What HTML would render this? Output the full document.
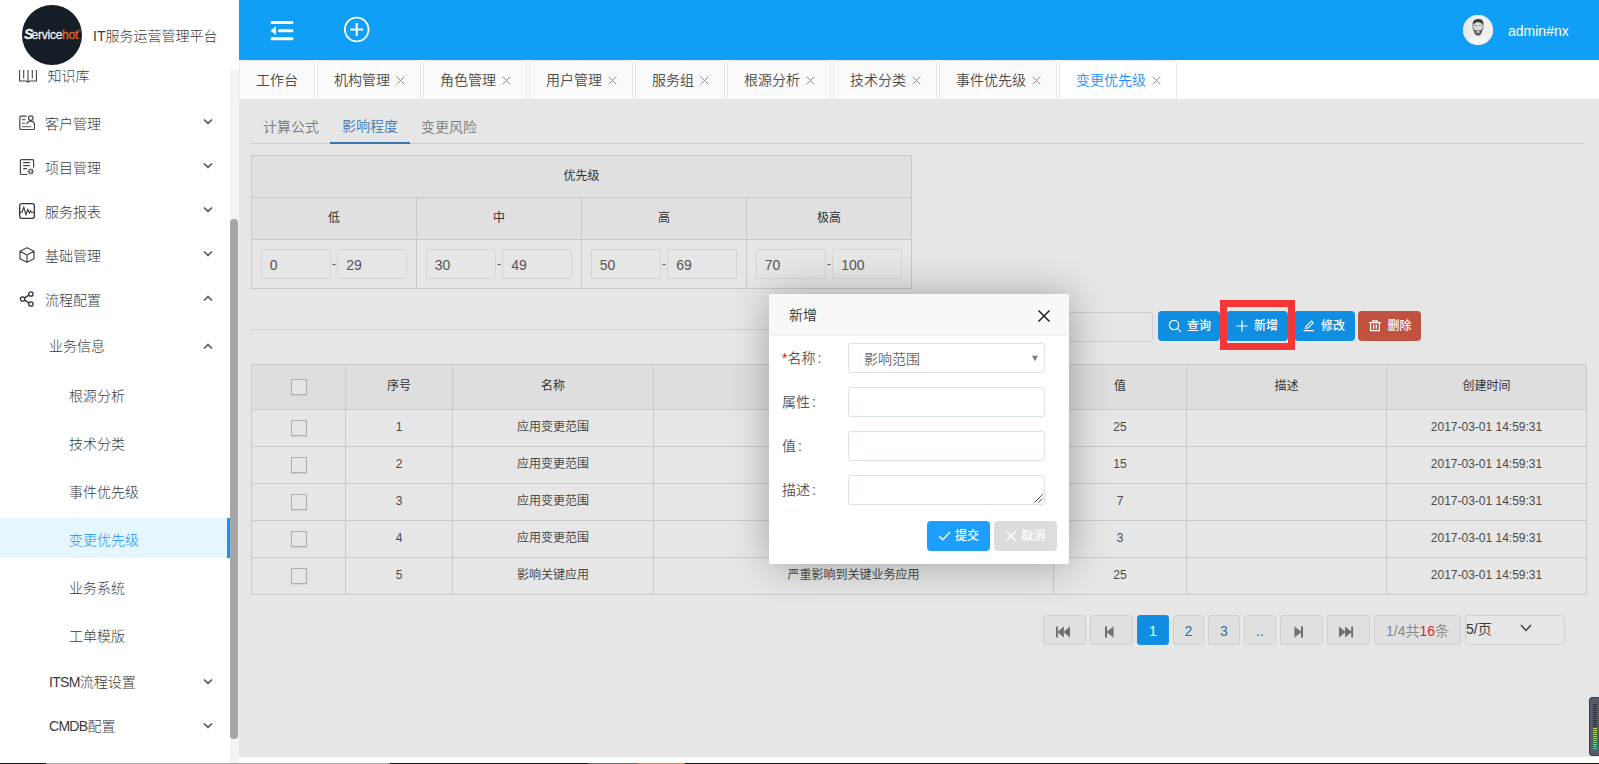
<!DOCTYPE html>
<html lang="zh-CN">
<head>
<meta charset="utf-8">
<title>IT服务运营管理平台</title>
<style>
*{box-sizing:border-box;margin:0;padding:0}
html,body{width:1599px;height:764px;overflow:hidden;background:#fff}
body{font-family:"Liberation Sans","Noto Sans CJK SC",sans-serif;font-size:14px;color:#333;position:relative;font-weight:350}
.abs{position:absolute}
/* sidebar */
#side{position:absolute;left:0;top:0;width:239px;height:764px;background:#fff;overflow:hidden}
#logo{position:absolute;left:22px;top:5px;width:60px;height:60px;border-radius:50%;background:#151d27}
#brand{position:absolute;left:93px;top:26px;font-size:14px;color:#2b2b2b;line-height:20px;white-space:nowrap}
.mi{position:absolute;left:0;width:230px;height:40px;line-height:40px;font-size:14px;color:#444;white-space:nowrap}
.mi .t{position:absolute;left:45px;top:0}
.mi.s .t{left:49px}
.mi.l .t{left:69px}
.mi svg.ic{position:absolute;left:19px;top:11px}
.mi svg.ar{position:absolute;left:203px;top:15px}
.mi.act{background:#e6f6ff;color:#1890ff;border-right:3px solid #1890ff}
#strack{position:absolute;left:230px;top:70px;width:9px;height:693px;background:#f3f3f3}
#sthumb{position:absolute;left:230px;top:219px;width:8px;height:520px;background:#a6a6a6;border-radius:4px}

#sidehead{position:absolute;left:0;top:0;width:239px;height:70px;background:#fff}
#logo .lg{position:absolute;left:2px;top:21px;font-size:12px;color:#f2f2f2;font-weight:normal;letter-spacing:-0.25px;-webkit-text-stroke:0.3px #f2f2f2;line-height:16px;font-style:normal;white-space:nowrap}
#logo .lg b{font-size:14px;font-style:italic;font-weight:bold;margin-right:-1.5px}
#logo .lg i{color:#e4672b;font-style:normal;-webkit-text-stroke:0.3px #e4672b}
#logo .lg sup{-webkit-text-stroke:0;font-size:4px;color:#bbb;position:relative;top:-3px;vertical-align:top;letter-spacing:0}
/* header */
#hdr{position:absolute;left:239px;top:0;width:1360px;height:60px;background:#0f9ff7}
#uname{position:absolute;left:1269px;top:21px;color:#fff;font-size:14px;line-height:20px}
#avatar{position:absolute;left:1224px;top:15px;width:30px;height:30px;border-radius:50%;background:#e9e9e9;overflow:hidden}
/* tabs */
#tabs{position:absolute;left:239px;top:60px;width:1360px;height:39px;background:#fff}
.tab{position:absolute;top:0;height:39px;background:#fafafa;border:1px solid #e8e8e8;border-bottom:none;border-radius:4px 4px 0 0;line-height:38px;font-size:14px;color:#4a4a4a;padding-left:16px;white-space:nowrap}
.tab .x{position:absolute;right:15px;top:15px}
.tab.on{background:#fff;color:#1890ff}
/* content */
#cont{position:absolute;left:239px;top:100px;width:1360px;height:657px;background:#e6e6e6;box-shadow:0 -1px 0 #e6e6e6}

.itab{margin-left:1px;position:absolute;font-size:14px;line-height:20px;color:#7a7a7a;white-space:nowrap}
.itab.on{color:#3b7cb4}
table{border-collapse:collapse;position:absolute;table-layout:fixed}
.pt{width:661px}
.pt th,.pt td{border:1px solid #c9c9c9;text-align:center;font-size:12px;color:#333;font-weight:normal;background:#e0e0e0;padding:0}
.pt th{padding-bottom:4px}
.pt td{background:#e6e6e6;white-space:nowrap;font-size:0}
.pt .in{display:inline-block;width:70px;height:30px;border:1px solid #d2d6d6;border-radius:2px;background:#e6e6e6;text-align:left;padding-left:8px;font-size:14px;line-height:30px;color:#555;vertical-align:middle}
.pt .ds{display:inline-block;width:6.5px;font-size:12px;color:#555;vertical-align:middle;text-align:center}
.sin{border:1px solid #c6d0d6;border-radius:3px;background:#e5e5e5}
.btn{position:absolute;height:30px;border-radius:4px;color:#fff;font-size:12px;line-height:31px;padding-left:1px;text-align:center;white-space:nowrap}
.btn svg{vertical-align:-2.5px;margin-right:5px}
.dt{width:1336px}
.dt th,.dt td{border:1px solid #c9c9c9;text-align:center;font-size:12px;color:#4a4a4a;font-weight:normal;padding:0}
.dt th,.dt td{line-height:16px;padding-bottom:2px}
.dt th{background:#dedede;color:#333;padding-bottom:2px}
.cb{position:relative;top:1px;display:inline-block;width:16px;height:16px;border:1px solid #b0b0b0;background:#e5e5e5;vertical-align:middle;box-shadow:0 1px 1px rgba(0,0,0,.07)}
.pg{position:absolute;height:30px;border:1px solid #ccd2d5;border-radius:3px;background:#e0e0e0;text-align:center;line-height:30px;font-size:14px;color:#888}
.pg svg{vertical-align:-1.5px}
.pg.ic{padding-right:5px}
.pg.cur{background:#108fe2;border-color:#1b8fe4;color:#fff}
.pg.num{color:#2f6fab}
.pg.info em{color:#e0202c;font-style:normal}
.pg.sel{text-align:left;color:#333;background:#e6e6e6}
.pg.sel .pp{position:absolute;left:0;top:-2px}

#modal{position:absolute;left:769px;top:294px;width:300px;height:270px;background:#fff;box-shadow:1px 1px 38px rgba(0,0,0,.3);border-radius:2px}
#modal .mt{position:absolute;left:0;top:0;width:300px;height:42px;background:#f8f8f8;border-bottom:1px solid #eee;border-radius:2px 2px 0 0}
#modal .ttl{position:absolute;left:20px;top:11px;font-size:14px;line-height:20px;color:#333}
#modal .fl i{font-style:normal;margin-left:2px;font-weight:400}
#modal .fl{position:absolute;left:13px;font-size:14px;line-height:20px;color:#555;white-space:nowrap}
#modal .fl em{color:#f00;font-style:normal}
#modal .fi{position:absolute;left:79px;width:197px;height:30px;border:1px solid #d9e3e3;border-radius:3px;background:#fff}
#modal .sv{position:absolute;left:15px;top:5px;font-size:14px;line-height:20px;color:#666}
#modal .car{position:absolute;right:4px;top:8px;font-size:10px;line-height:12px;color:#7a7a7a;transform:scaleY(0.9)}
#modal .mb{position:absolute;top:227px;height:30px;border-radius:4px;font-size:12px;line-height:30px;text-align:center;white-space:nowrap}
#modal .mb svg{vertical-align:-2px;margin-right:4px}
.mi.k .t{left:47.5px}
.mi.k svg.ic{top:9px}
.mi.act .t{top:1.5px}
.mi,#brand{font-weight:300;color:#3a3a3a}
.btn,#modal .mb{font-weight:500}
#modal .fl{top:auto;margin-top:-1px}
.la{letter-spacing:-0.7px}
</style>
</head>
<body>
<div id="cont">
  <div class="itab" style="left:23px;top:17px">计算公式</div>
  <div class="itab on" style="left:102px;top:16px">影响程度</div>
  <div class="itab" style="left:181px;top:17px">变更风险</div>
  <div class="abs" style="left:12px;top:43px;width:1333px;height:1px;background:#cfcfcf"></div>
  <div class="abs" style="left:91px;top:42px;width:80px;height:2px;background:#3678ad"></div>
  <table class="pt" style="left:12px;top:55px"><tr style="height:42px"><th colspan="4">优先级</th></tr><tr style="height:42px"><th>低</th><th>中</th><th>高</th><th>极高</th></tr><tr style="height:49px"><td><span class="in">0</span><span class="ds">-</span><span class="in">29</span></td><td><span class="in">30</span><span class="ds">-</span><span class="in">49</span></td><td><span class="in">50</span><span class="ds">-</span><span class="in">69</span></td><td><span class="in">70</span><span class="ds">-</span><span class="in">100</span></td></tr></table>
  <div class="abs" style="left:12px;top:229px;width:740px;height:1px;background:#cfcfcf"></div>
  <div class="abs sin" style="left:761px;top:212px;width:153px;height:30px"></div>
  <div class="btn" style="left:919px;top:211px;width:62px;background:#108fe2"><svg width="14" height="14" viewBox="0 0 14 14"><circle cx="6" cy="6" r="4.6" fill="none" stroke="#fff" stroke-width="1.2"/><path d="M9.4 9.4 L12.8 12.8" stroke="#fff" stroke-width="1.2"/></svg>查询</div>
  <div class="btn" style="left:987px;top:211px;width:62px;padding-left:0;padding-right:1px;background:#108fe2"><svg width="14" height="14" viewBox="0 0 14 14"><path d="M1.5 7 H12.5 M7 1.5 V12.5" stroke="#fff" stroke-width="1.2"/></svg>新增</div>
  <div class="btn" style="left:1055px;top:211px;width:61px;padding-left:0;padding-right:2px;background:#108fe2"><svg width="14" height="14" viewBox="0 0 14 14"><path d="M3.4 9.4 L4.2 7.2 L9.4 2 L11.2 3.8 L6 9 Z M1.5 11.6 H12" fill="none" stroke="#fff" stroke-width="1.1"/></svg>修改</div>
  <div class="btn" style="left:1119px;top:211px;width:63px;background:#c0523f"><svg width="14" height="14" viewBox="0 0 14 14"><path d="M1 3.6 H13 M4.8 3.4 V1.8 H9.2 V3.4 M2.6 3.8 V11.6 H11.4 V3.8 M5.7 5.6 V9.8 M8.3 5.6 V9.8" fill="none" stroke="#fff" stroke-width="1.2"/></svg>删除</div>
  <div class="abs" style="left:981px;top:200px;width:75px;height:50px;border:7px solid #f63536"></div>
  <table class="dt" style="left:12px;top:264px"><colgroup><col style="width:94px"><col style="width:107px"><col style="width:201px"><col style="width:400px"><col style="width:133px"><col style="width:200px"><col style="width:200px"></colgroup><tr style="height:45px"><th><span class="cb"></span></th><th>序号</th><th>名称</th><th>属性</th><th>值</th><th>描述</th><th>创建时间</th></tr><tr style="height:37px"><td><span class="cb"></span></td><td>1</td><td>应用变更范围</td><td>影响多个业务系统</td><td>25</td><td></td><td>2017-03-01 14:59:31</td></tr><tr style="height:37px"><td><span class="cb"></span></td><td>2</td><td>应用变更范围</td><td>影响单个业务系统</td><td>15</td><td></td><td>2017-03-01 14:59:31</td></tr><tr style="height:37px"><td><span class="cb"></span></td><td>3</td><td>应用变更范围</td><td>影响部分功能模块</td><td>7</td><td></td><td>2017-03-01 14:59:31</td></tr><tr style="height:37px"><td><span class="cb"></span></td><td>4</td><td>应用变更范围</td><td>基本无影响</td><td>3</td><td></td><td>2017-03-01 14:59:31</td></tr><tr style="height:37px"><td><span class="cb"></span></td><td>5</td><td>影响关键应用</td><td>严重影响到关键业务应用</td><td>25</td><td></td><td>2017-03-01 14:59:31</td></tr></table>
  <div class="pg ic" style="left:804px;top:515px;width:43px"><svg width="15" height="12" viewBox="0 0 16 12" preserveAspectRatio="none"><path d="M1 0.5 H3 V11.5 H1 Z M9.5 0.5 V11.5 L2.5 6 Z M16 0.5 V11.5 L9 6 Z" fill="#6e6e6e"/></svg></div>
  <div class="pg ic" style="left:851px;top:515px;width:43px"><svg width="10" height="12" viewBox="0 0 10 12"><path d="M1 0.5 H3 V11.5 H1 Z M9.5 0.5 V11.5 L2.5 6 Z" fill="#6e6e6e"/></svg></div>
  <div class="pg cur" style="left:898px;top:515px;width:32px">1</div>
  <div class="pg num" style="left:934px;top:515px;width:31px">2</div>
  <div class="pg num" style="left:969px;top:515px;width:32px">3</div>
  <div class="pg num" style="left:1005px;top:515px;width:32px">..</div>
  <div class="pg ic" style="left:1041px;top:515px;width:43px"><svg width="10" height="12" viewBox="0 0 10 12"><path d="M9 0.5 H7 V11.5 H9 Z M0.5 0.5 V11.5 L7.5 6 Z" fill="#6e6e6e"/></svg></div>
  <div class="pg ic" style="left:1088px;top:515px;width:43px"><svg width="15" height="12" viewBox="0 0 16 12" preserveAspectRatio="none"><path d="M15 0.5 H13 V11.5 H15 Z M6.5 0.5 V11.5 L13.5 6 Z M0 0.5 V11.5 L7 6 Z" fill="#6e6e6e"/></svg></div>
  <div class="pg info" style="left:1135px;top:515px;width:87px">1/4共<em>16</em>条</div>
  <div class="pg sel" style="left:1226px;top:515px;width:100px"><span class="pp">5/页</span><svg class="abs" style="left:54px;top:8px" width="12" height="8" viewBox="0 0 12 8"><path d="M1 1 L6 6.5 L11 1" fill="none" stroke="#333" stroke-width="1.2"/></svg></div>
</div>
<div id="modal">
  <div class="mt"><span class="ttl">新增</span><svg class="abs" style="left:268px;top:15px" width="14" height="14" viewBox="0 0 14 14"><path d="M1.5 1.5 L12.5 12.5 M12.5 1.5 L1.5 12.5" stroke="#222" stroke-width="1.5"/></svg></div>
  <div class="fl" style="top:55px"><em>*</em>名称<i>:</i></div>
  <div class="fi" style="top:49px"><span class="sv">影响范围</span><span class="car">▼</span></div>
  <div class="fl" style="top:99px">属性<i>:</i></div>
  <div class="fi" style="top:93px"></div>
  <div class="fl" style="top:143px">值<i>:</i></div>
  <div class="fi" style="top:137px"></div>
  <div class="fl" style="top:187px">描述<i>:</i></div>
  <div class="fi" style="top:181px"><svg class="abs" style="right:1px;bottom:1px" width="10" height="10" viewBox="0 0 10 10"><path d="M9.5 1.5 L1.5 9.5 M9.5 5.5 L5.5 9.5" stroke="#555" stroke-width="1"/></svg></div>
  <div class="mb" style="left:158px;width:63px;background:#1e9fff;color:#fff"><svg width="13" height="12" viewBox="0 0 13 12"><path d="M1.2 6.2 L4.8 9.8 L11.8 2.2" fill="none" stroke="#fff" stroke-width="1.4"/></svg>提交</div>
  <div class="mb" style="left:225px;width:63px;background:#dcdcdc;color:#fff"><svg width="12" height="12" viewBox="0 0 12 12"><path d="M1.5 1.5 L10.5 10.5 M10.5 1.5 L1.5 10.5" stroke="#fff" stroke-width="1.2"/></svg>取消</div>
</div>
<div id="side">
  <div id="menu">
  <div class="mi k" style="top:56px"><svg class="ic" width="18" height="18" viewBox="0 0 18 18"><path d="M0.6 0 V16 H7.4 L9 17.3 L10.6 16 H17.4 V0 M4.7 0 V13.6 M9 0 V16 M13.3 0 V13.6" fill="none" stroke="#444" stroke-width="1.1"/></svg><span class="t">知识库</span></div>
  <div class="mi " style="top:104px"><svg class="ic" width="16" height="16" viewBox="0 0 16 16"><path d="M7.8 1.2 H2 Q0.8 1.2 0.8 2.4 V13.3 Q0.8 14.5 2 14.5 H14.3 Q15.5 14.5 15.5 13.3 V9.8 Q15.3 6.1 11.8 6.1 Q8.6 6.1 7.7 9.3" fill="none" stroke="#444" stroke-width="1.2"/><circle cx="11.8" cy="3.1" r="2.3" fill="none" stroke="#444" stroke-width="1.2"/><path d="M2.9 4.5 H6.6 M2.9 8.1 H6.2 M2.9 11.7 H12.4" fill="none" stroke="#777" stroke-width="1.3"/></svg><span class="t">客户管理</span><svg class="ar" style="top:13px" width="10" height="10" viewBox="0 0 10 10"><path d="M1 2.5 L5 6.3 L9 2.5" fill="none" stroke="#555" stroke-width="1.6"/></svg></div>
  <div class="mi " style="top:148px"><svg class="ic" width="16" height="16" viewBox="0 0 16 16"><path d="M14.6 8.6 V1.8 Q14.6 0.6 13.4 0.6 H2.6 Q1.4 0.6 1.4 1.8 V14.3 Q1.4 15.5 2.6 15.5 H8.2 M4.2 3.7 H11 M4.2 6.7 H10.6 M4.2 9.6 H8" fill="none" stroke="#444" stroke-width="1.2"/><circle cx="11.7" cy="12.5" r="1.7" fill="none" stroke="#444" stroke-width="1.1"/><path d="M11.7 9.4 V10.3 M11.7 14.7 V15.6 M8.6 12.5 H9.5 M13.9 12.5 H14.8 M9.5 10.3 L10.2 11 M13.2 14 L13.9 14.7 M13.9 10.3 L13.2 11 M10.2 14 L9.5 14.7" stroke="#444" stroke-width="1.1"/></svg><span class="t">项目管理</span><svg class="ar" style="top:13px" width="10" height="10" viewBox="0 0 10 10"><path d="M1 2.5 L5 6.3 L9 2.5" fill="none" stroke="#555" stroke-width="1.6"/></svg></div>
  <div class="mi " style="top:192px"><svg class="ic" width="16" height="16" viewBox="0 0 16 16"><rect x="0.7" y="0.7" width="14.6" height="14.6" rx="2" fill="none" stroke="#333" stroke-width="1.3"/><path d="M1 9.2 H3 L4.8 4.2 L7 11.6 L8.8 6.4 L10.4 10 L11.6 7.8 L12.6 9.2 H15" fill="none" stroke="#333" stroke-width="1.1"/></svg><span class="t">服务报表</span><svg class="ar" style="top:13px" width="10" height="10" viewBox="0 0 10 10"><path d="M1 2.5 L5 6.3 L9 2.5" fill="none" stroke="#555" stroke-width="1.6"/></svg></div>
  <div class="mi " style="top:236px"><svg class="ic" width="16" height="16" viewBox="0 0 16 16"><path d="M8 0.7 L15 4.3 V11.7 L8 15.3 L1 11.7 V4.3 Z M1 4.3 L8 8 L15 4.3 M8 8 V15.3" fill="none" stroke="#444" stroke-width="1.2" stroke-linejoin="round"/></svg><span class="t">基础管理</span><svg class="ar" style="top:13px" width="10" height="10" viewBox="0 0 10 10"><path d="M1 2.5 L5 6.3 L9 2.5" fill="none" stroke="#555" stroke-width="1.6"/></svg></div>
  <div class="mi " style="top:280px"><svg class="ic" width="16" height="16" viewBox="0 0 16 16"><circle cx="3.6" cy="8" r="2.2" fill="none" stroke="#333" stroke-width="1.3"/><circle cx="11.9" cy="3" r="2.2" fill="none" stroke="#333" stroke-width="1.3"/><circle cx="11.9" cy="13" r="2.2" fill="none" stroke="#333" stroke-width="1.3"/><path d="M5.5 6.9 L10 4.1 M5.5 9.1 L10 11.9" stroke="#333" stroke-width="1.3"/></svg><span class="t">流程配置</span><svg class="ar" style="top:14px" width="10" height="10" viewBox="0 0 10 10"><path d="M1 6.5 L5 2.7 L9 6.5" fill="none" stroke="#555" stroke-width="1.6"/></svg></div>
  <div class="mi s" style="top:326px"><span class="t">业务信息</span><svg class="ar" style="top:16px" width="10" height="10" viewBox="0 0 10 10"><path d="M1 6.5 L5 2.7 L9 6.5" fill="none" stroke="#555" stroke-width="1.6"/></svg></div>
  <div class="mi l" style="top:376px"><span class="t">根源分析</span></div>
  <div class="mi l" style="top:424px"><span class="t">技术分类</span></div>
  <div class="mi l" style="top:472px"><span class="t">事件优先级</span></div>
  <div class="mi l act" style="top:518px"><span class="t">变更优先级</span></div>
  <div class="mi l" style="top:568px"><span class="t">业务系统</span></div>
  <div class="mi l" style="top:616px"><span class="t">工单模版</span></div>
  <div class="mi s" style="top:662px"><span class="t"><span class="la">ITSM</span>流程设置</span><svg class="ar" style="top:15px" width="10" height="10" viewBox="0 0 10 10"><path d="M1 2.5 L5 6.3 L9 2.5" fill="none" stroke="#555" stroke-width="1.6"/></svg></div>
  <div class="mi s" style="top:706px"><span class="t"><span class="la">CMDB</span>配置</span><svg class="ar" style="top:15px" width="10" height="10" viewBox="0 0 10 10"><path d="M1 2.5 L5 6.3 L9 2.5" fill="none" stroke="#555" stroke-width="1.6"/></svg></div>
  </div>
  <div id="strack"></div><div id="sthumb"></div>
  <div id="sidehead"></div>
  <div id="logo"><span class="lg"><b>S</b>ervice<i>hot</i><sup>®</sup></span></div>
  <div id="brand">IT服务运营管理平台</div>
</div>
<div id="hdr">
  <svg class="abs" style="left:30px;top:19px" width="26" height="24" viewBox="0 0 26 24"><path d="M3 3.5 H23 M10.5 11.7 H23 M3 19.7 H23" stroke="#fff" stroke-width="3" stroke-linecap="round" fill="none"/><path d="M1.5 11.7 L7 7.3 V16.1 Z" fill="#fff"/></svg>
  <svg class="abs" style="left:104px;top:16px" width="28" height="28" viewBox="0 0 28 28"><circle cx="13.7" cy="13.5" r="11.8" fill="none" stroke="#fff" stroke-width="1.8"/><path d="M7.2 13.5 H20.2 M13.7 7 V20" stroke="#fff" stroke-width="2"/></svg>
  <div id="avatar"><svg width="30" height="30" viewBox="0 0 30 30"><defs><filter id="bl" x="-20%" y="-20%" width="140%" height="140%"><feGaussianBlur stdDeviation="0.55"/></filter><linearGradient id="ag" x1="0" x2="1"><stop offset="0" stop-color="#e6e6e6"/><stop offset="0.5" stop-color="#f1f1f1"/><stop offset="1" stop-color="#efefef"/></linearGradient></defs><rect width="30" height="30" fill="url(#ag)"/><g filter="url(#bl)"><path d="M9.6 13.5 Q9 7 11.6 5 Q15 3.2 18.6 4.8 Q21.2 7 20.4 13.5 L19.6 15.5 H10.4 Z" fill="#8a8a8a"/><path d="M9.7 9.5 Q9.3 6.3 11.6 5 Q15 3.2 18.6 4.8 Q20.9 6.3 20.3 9.5 Q19 7.4 15 7.6 Q11 7.4 9.7 9.5Z" fill="#3c3c3c"/><ellipse cx="15" cy="11.8" rx="4.5" ry="4.6" fill="#dedede"/><path d="M10.6 14.2 Q11 20.2 15 20.7 Q19 20.2 19.4 14.2 Q17.5 15.4 15 15.4 Q12.5 15.4 10.6 14.2Z" fill="#5a5a5a"/><ellipse cx="15" cy="17" rx="2.1" ry="1" fill="#c4c4c4"/><path d="M12 10.6 H14 M16 10.6 H18" stroke="#777" stroke-width="0.9"/><path d="M14.6 11 V14" stroke="#bbb" stroke-width="0.8"/><path d="M4 30 Q6 22.5 12 21.6 Q15 23.2 18 21.6 Q24 22.5 26 30Z" fill="#f6f6f6"/></g></svg></div>
  <div id="uname">admin#nx</div>
</div>
<div id="tabs">
  <div class="tab" style="left:0px;width:76px">工作台</div>
  <div class="tab" style="left:78px;width:104px">机构管理<svg class="x" width="9" height="9" viewBox="0 0 9 9"><path d="M0.7 0.7 L8.3 8.3 M8.3 0.7 L0.7 8.3" stroke="#8c8c8c" stroke-width="1"/></svg></div>
  <div class="tab" style="left:184px;width:104px">角色管理<svg class="x" width="9" height="9" viewBox="0 0 9 9"><path d="M0.7 0.7 L8.3 8.3 M8.3 0.7 L0.7 8.3" stroke="#8c8c8c" stroke-width="1"/></svg></div>
  <div class="tab" style="left:290px;width:104px">用户管理<svg class="x" width="9" height="9" viewBox="0 0 9 9"><path d="M0.7 0.7 L8.3 8.3 M8.3 0.7 L0.7 8.3" stroke="#8c8c8c" stroke-width="1"/></svg></div>
  <div class="tab" style="left:396px;width:90px">服务组<svg class="x" width="9" height="9" viewBox="0 0 9 9"><path d="M0.7 0.7 L8.3 8.3 M8.3 0.7 L0.7 8.3" stroke="#8c8c8c" stroke-width="1"/></svg></div>
  <div class="tab" style="left:488px;width:104px">根源分析<svg class="x" width="9" height="9" viewBox="0 0 9 9"><path d="M0.7 0.7 L8.3 8.3 M8.3 0.7 L0.7 8.3" stroke="#8c8c8c" stroke-width="1"/></svg></div>
  <div class="tab" style="left:594px;width:104px">技术分类<svg class="x" width="9" height="9" viewBox="0 0 9 9"><path d="M0.7 0.7 L8.3 8.3 M8.3 0.7 L0.7 8.3" stroke="#8c8c8c" stroke-width="1"/></svg></div>
  <div class="tab" style="left:700px;width:118px">事件优先级<svg class="x" width="9" height="9" viewBox="0 0 9 9"><path d="M0.7 0.7 L8.3 8.3 M8.3 0.7 L0.7 8.3" stroke="#8c8c8c" stroke-width="1"/></svg></div>
  <div class="tab on" style="left:820px;width:118px">变更优先级<svg class="x" width="9" height="9" viewBox="0 0 9 9"><path d="M0.7 0.7 L8.3 8.3 M8.3 0.7 L0.7 8.3" stroke="#8c8c8c" stroke-width="1"/></svg></div>
</div>
<div class="abs" style="left:239px;top:757px;width:1360px;height:7px;background:#fff"></div>
<div class="abs" style="left:0;top:763px;width:1599px;height:1px;background:#151515"></div>
<div class="abs" style="left:46px;top:763px;width:344px;height:1px;background:#a9a9a9"></div>
<div class="abs" style="left:588px;top:763px;width:49px;height:1px;background:#6d655c"></div>
<div class="abs" style="left:637px;top:763px;width:48px;height:1px;background:#c98a4a"></div>
<div class="abs" style="left:1589px;top:697px;width:12px;height:59px;background:#565b69;border:1px solid #3b404c;border-radius:3px"><div class="abs" style="left:3px;top:6px;width:4px;height:24px;background:repeating-linear-gradient(#2f333d 0 1px,#565b69 1px 2px)"></div><div class="abs" style="left:3px;top:30px;width:4px;height:22px;background:linear-gradient(#c9da48,#3fd2b2);-webkit-mask:repeating-linear-gradient(#000 0 1px,transparent 1px 2px);mask:repeating-linear-gradient(#000 0 1px,transparent 1px 2px)"></div></div>
</body>
</html>
